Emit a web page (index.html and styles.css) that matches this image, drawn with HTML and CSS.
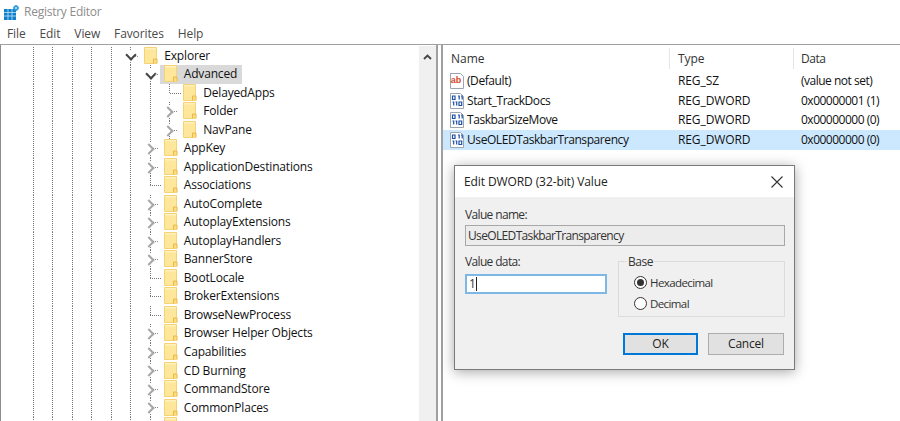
FILE: index.html
```html
<!DOCTYPE html>
<html lang="en">
<head>
<meta charset="utf-8">
<title>Registry Editor</title>
<link rel="stylesheet" href="styles.css">
</head>
<body>
<svg class="defs" width="0" height="0" aria-hidden="true">
  <defs>
    <symbol id="folder" viewBox="0 0 14 18">
      <path d="M.5 .5h12v16h-12z" fill="#fee79b" stroke="#f5d273"/>
      <path d="M1 1h11v1.500h-11z" fill="#fff0bd"/>
      <path d="M9.500 16.500v-4.500h3.500v4.500" fill="#fddc7c" stroke="#e9b94a"/>
    </symbol>
    <symbol id="sz" viewBox="0 0 16 16">
      <path d="M1.500 .5h10l3 3v12h-13z" fill="#fff" stroke="#9aa5b1"/>
      <text x="1.800" y="10.400" class="ico-ab">ab</text>
    </symbol>
    <symbol id="dw" viewBox="0 0 16 16">
      <path d="M1.500 .5h10l3 3v12h-13z" fill="#fff" stroke="#9aa5b1"/>
      <path d="M3.500 3h2.500v3.500h-2.500zM9 3h1.200v3.500M12 3h1.200v3.500M3.500 9h1.200v3.500M6.500 9h1.200v3.500M10 9h2.700v3.500h-2.700z" fill="none" stroke="#1c4fa8" stroke-width="1.200"/>
    </symbol>
  </defs>
</svg>

<header class="titlebar">
  <svg class="app-icon" width="18" height="17" viewBox="0 0 18 17" aria-hidden="true">
    <path d="M2 5h12v11H2z" fill="#0f7fc9"/>
    <path d="M6 5v11M10 5v11M2 8.500h12M2 12h12" stroke="#bfe3f7" stroke-width=".8"/>
    <path d="M12 2l2-1 2 1 1 2-1 2-2 1-2-1-1-2z" fill="#2a9ad8"/>
    <circle cx="14" cy="4" r="1" fill="#d5eefa"/>
  </svg>
  <span>Registry Editor</span>
</header>

<nav class="menubar">
  <span>File</span><span>Edit</span><span>View</span><span>Favorites</span><span>Help</span>
</nav>

<main class="panes">
  <section class="tree">
    <div class="rows">
      <div class="row"><i class="g"></i><i class="g"></i><i class="g"></i><i class="g"></i><i class="g"></i><i class="c open"></i><div class="node"><svg class="fld"><use href="#folder"/></svg>Explorer</div></div>
      <div class="row"><i class="g"></i><i class="g"></i><i class="g"></i><i class="g"></i><i class="g"></i><i class="g"></i><i class="c open"></i><div class="node sel"><svg class="fld"><use href="#folder"/></svg>Advanced</div></div>
      <div class="row"><i class="g"></i><i class="g"></i><i class="g"></i><i class="g"></i><i class="g"></i><i class="g"></i><i class="g"></i><i class="c leaf"></i><div class="node"><svg class="fld"><use href="#folder"/></svg>DelayedApps</div></div>
      <div class="row"><i class="g"></i><i class="g"></i><i class="g"></i><i class="g"></i><i class="g"></i><i class="g"></i><i class="g"></i><i class="c"></i><div class="node"><svg class="fld"><use href="#folder"/></svg>Folder</div></div>
      <div class="row"><i class="g"></i><i class="g"></i><i class="g"></i><i class="g"></i><i class="g"></i><i class="g"></i><i class="g"></i><i class="c"></i><div class="node"><svg class="fld"><use href="#folder"/></svg>NavPane</div></div>
      <div class="row"><i class="g"></i><i class="g"></i><i class="g"></i><i class="g"></i><i class="g"></i><i class="g"></i><i class="c"></i><div class="node"><svg class="fld"><use href="#folder"/></svg>AppKey</div></div>
      <div class="row"><i class="g"></i><i class="g"></i><i class="g"></i><i class="g"></i><i class="g"></i><i class="g"></i><i class="c"></i><div class="node"><svg class="fld"><use href="#folder"/></svg>ApplicationDestinations</div></div>
      <div class="row"><i class="g"></i><i class="g"></i><i class="g"></i><i class="g"></i><i class="g"></i><i class="g"></i><i class="c leaf"></i><div class="node"><svg class="fld"><use href="#folder"/></svg>Associations</div></div>
      <div class="row"><i class="g"></i><i class="g"></i><i class="g"></i><i class="g"></i><i class="g"></i><i class="g"></i><i class="c"></i><div class="node"><svg class="fld"><use href="#folder"/></svg>AutoComplete</div></div>
      <div class="row"><i class="g"></i><i class="g"></i><i class="g"></i><i class="g"></i><i class="g"></i><i class="g"></i><i class="c"></i><div class="node"><svg class="fld"><use href="#folder"/></svg>AutoplayExtensions</div></div>
      <div class="row"><i class="g"></i><i class="g"></i><i class="g"></i><i class="g"></i><i class="g"></i><i class="g"></i><i class="c"></i><div class="node"><svg class="fld"><use href="#folder"/></svg>AutoplayHandlers</div></div>
      <div class="row"><i class="g"></i><i class="g"></i><i class="g"></i><i class="g"></i><i class="g"></i><i class="g"></i><i class="c"></i><div class="node"><svg class="fld"><use href="#folder"/></svg>BannerStore</div></div>
      <div class="row"><i class="g"></i><i class="g"></i><i class="g"></i><i class="g"></i><i class="g"></i><i class="g"></i><i class="c leaf"></i><div class="node"><svg class="fld"><use href="#folder"/></svg>BootLocale</div></div>
      <div class="row"><i class="g"></i><i class="g"></i><i class="g"></i><i class="g"></i><i class="g"></i><i class="g"></i><i class="c leaf"></i><div class="node"><svg class="fld"><use href="#folder"/></svg>BrokerExtensions</div></div>
      <div class="row"><i class="g"></i><i class="g"></i><i class="g"></i><i class="g"></i><i class="g"></i><i class="g"></i><i class="c leaf"></i><div class="node"><svg class="fld"><use href="#folder"/></svg>BrowseNewProcess</div></div>
      <div class="row"><i class="g"></i><i class="g"></i><i class="g"></i><i class="g"></i><i class="g"></i><i class="g"></i><i class="c"></i><div class="node"><svg class="fld"><use href="#folder"/></svg>Browser Helper Objects</div></div>
      <div class="row"><i class="g"></i><i class="g"></i><i class="g"></i><i class="g"></i><i class="g"></i><i class="g"></i><i class="c"></i><div class="node"><svg class="fld"><use href="#folder"/></svg>Capabilities</div></div>
      <div class="row"><i class="g"></i><i class="g"></i><i class="g"></i><i class="g"></i><i class="g"></i><i class="g"></i><i class="c"></i><div class="node"><svg class="fld"><use href="#folder"/></svg>CD Burning</div></div>
      <div class="row"><i class="g"></i><i class="g"></i><i class="g"></i><i class="g"></i><i class="g"></i><i class="g"></i><i class="c"></i><div class="node"><svg class="fld"><use href="#folder"/></svg>CommandStore</div></div>
      <div class="row"><i class="g"></i><i class="g"></i><i class="g"></i><i class="g"></i><i class="g"></i><i class="g"></i><i class="c"></i><div class="node"><svg class="fld"><use href="#folder"/></svg>CommonPlaces</div></div>
      <div class="row"><i class="g"></i><i class="g"></i><i class="g"></i><i class="g"></i><i class="g"></i><i class="g"></i><i class="c"></i><div class="node"><svg class="fld"><use href="#folder"/></svg></div></div>
    </div>
    <div class="vscroll"><svg width="9" height="6" viewBox="0 0 9 6" aria-hidden="true"><path d="M1 5l3.500-3.500L8 5" fill="none" stroke="#444" stroke-width="1.800"/></svg></div>
  </section>

  <section class="list">
    <div class="lrow lhead"><span class="cn">Name</span><span class="ct">Type</span><span class="cd">Data</span></div>
    <div class="lrow"><span class="cn"><svg class="vi"><use href="#sz"/></svg>(Default)</span><span class="ct">REG_SZ</span><span class="cd">(value not set)</span></div>
    <div class="lrow"><span class="cn"><svg class="vi"><use href="#dw"/></svg>Start_TrackDocs</span><span class="ct">REG_DWORD</span><span class="cd">0x00000001 (1)</span></div>
    <div class="lrow"><span class="cn"><svg class="vi"><use href="#dw"/></svg>TaskbarSizeMove</span><span class="ct">REG_DWORD</span><span class="cd">0x00000000 (0)</span></div>
    <div class="lrow lsel"><span class="cn"><svg class="vi"><use href="#dw"/></svg>UseOLEDTaskbarTransparency</span><span class="ct">REG_DWORD</span><span class="cd">0x00000000 (0)</span></div>
  </section>
</main>

<div class="dialog" role="dialog">
  <div class="dtitle">
    <span>Edit DWORD (32-bit) Value</span>
    <svg width="12" height="12" viewBox="0 0 12 12" aria-hidden="true"><path d="M.5.500l11 11M11.500.500l-11 11" stroke="#333" stroke-width="1.100"/></svg>
  </div>
  <div class="dbody">
    <div class="lbl">Value name:</div>
    <div class="namebox">UseOLEDTaskbarTransparency</div>
    <div class="cols">
      <div class="datacol">
        <div class="lbl">Value data:</div>
        <div class="databox">1<i class="caret"></i></div>
      </div>
      <div class="base">
        <span class="legend">Base</span>
        <div class="radio"><i class="dot on"></i>Hexadecimal</div>
        <div class="radio"><i class="dot"></i>Decimal</div>
      </div>
    </div>
    <div class="btns">
      <div class="btn def">OK</div>
      <div class="btn wide">Cancel</div>
    </div>
  </div>
</div>
</body>
</html>
```
FILE: styles.css
```css
* { box-sizing: border-box; }
html, body { margin: 0; height: 421px; overflow: hidden; }
body {
  position: relative;
  background: #fff;
  font: 12px/16px "Open Sans", "Noto Sans", sans-serif;
  color: #1a1a1a;
}
.defs { position: absolute; }
.ico-ab { font: bold 9px "Liberation Sans", sans-serif; fill: #d4472a; }

.titlebar { height: 24px; display: flex; align-items: center; gap: 4px; padding-left: 2px; color: #8d8d8d; letter-spacing: -.25px; }
.menubar { height: 20px; display: flex; gap: 14px; padding: 0 0 0 7px; align-items: center; color: #4a4a4a; letter-spacing: -.12px; }

.panes { height: 377px; display: flex; border-top: 1px solid #a0a0a0; }

.tree { width: 438px; border-left: 1px solid #8c8c8c; border-right: 2px solid #a0a0a0; flex: none; display: flex; }
.rows { flex: 1; min-width: 0; overflow: hidden; padding: 1.500px 0 0 22.250px; letter-spacing: -.17px; }
.vscroll { width: 17px; flex: none; background: #f0f0f0; margin-top: 1px; display: flex; justify-content: center; align-items: flex-start; padding-top: 8px; }

.row { height: 18.530px; display: flex; align-items: stretch; white-space: nowrap; }
.g, .c { flex: none; width: 19.500px; position: relative; }
.g { background: repeating-linear-gradient(#777 0 1px, transparent 1px 2px) center / 1px 100% no-repeat; }
.c {
  background:
    repeating-linear-gradient(#777 0 1px, transparent 1px 2px) center top / 1px 3px no-repeat,
    repeating-linear-gradient(#777 0 1px, transparent 1px 2px) center bottom / 1px 3px no-repeat;
}
.c::before { content: ""; position: absolute; left: 4.500px; top: 6px; width: 6px; height: 6px; border-right: 2px solid #a6a6a6; border-top: 2px solid #a6a6a6; transform: rotate(45deg); }
.c::after { content: ""; position: absolute; left: 14.500px; top: 9px; width: 4px; height: 1px; background: repeating-linear-gradient(90deg, #888 0 1px, transparent 1px 2px); }
.c.open::before { left: 6.500px; top: 4.500px; border-color: #444; transform: rotate(135deg); }
.c.leaf { background: none; }
.c.leaf::before { left: 9.500px; top: 0; width: 1px; height: 10px; border: 0; transform: none; background: repeating-linear-gradient(#777 0 1px, transparent 1px 2px); }
.c.leaf::after { left: 10px; width: 12px; background: repeating-linear-gradient(90deg, #777 0 1px, transparent 1px 2px); }
.node { display: flex; align-items: center; padding: 0 5px 0 4px; color: #111; }
.sel { background: #d9d9d9; }
.fld { width: 14px; height: 18px; margin-right: 6px; flex: none; }

.list { flex: 1; margin-left: 3px; border-left: 2px solid #a0a0a0; padding-top: 3px; min-width: 0; }
.lrow { height: 19.600px; display: flex; align-items: center; white-space: nowrap; color: #111; }
.lhead { height: 21px; margin-bottom: 2.500px; color: #333; }
.cn { width: 227px; padding-left: 6px; display: flex; align-items: center; flex: none; letter-spacing: -.42px; }
.lhead .cn, .lhead .ct, .lhead .cd { align-self: stretch; line-height: 21px; }
.lhead .cn { padding-left: 8px; letter-spacing: 0; border-right: 1px solid #e5e5e5; }
.lhead .ct { border-right: 1px solid #e5e5e5; }
.ct { width: 124px; padding-left: 8px; flex: none; letter-spacing: -.1px; }
.cd { padding-left: 7px; flex: none; letter-spacing: -.5px; }
.vi { width: 16px; height: 16px; margin-right: 2px; flex: none; letter-spacing: 0; }
.lsel { background: #cce8ff; }

.dialog {
  position: absolute; left: 454px; top: 165px; width: 341px; height: 205px;
  border: 1px solid #7a7a7a; background: #f0f0f0; box-shadow: 0 2px 12px rgba(0,0,0,.35);
}
.dtitle { height: 31px; background: #fff; display: flex; justify-content: space-between; align-items: center; padding: 0 11px 0 9px; color: #222; letter-spacing: -.1px; }
.dbody { padding: 10px 9px 0 10px; color: #333; letter-spacing: -.65px; }
.lbl { height: 17px; line-height: 16px; }
.namebox { height: 21px; margin-top: 1px; border: 1px solid #a8a8a8; background: #ececec; line-height: 19px; padding-left: 2px; }
.cols { display: flex; justify-content: space-between; margin-top: 8px; }
.datacol { width: 142px; }
.databox { height: 20px; margin-top: 3px; border: 2px solid #7db8e4; background: #fff; padding-left: 2px; display: flex; align-items: center; }
.caret { width: 1px; height: 14px; background: #222; margin-left: 1px; }
.base { padding: 10px 0 0 15px; width: 167px; height: 56px; border: 1px solid #dcdcdc; position: relative; margin-top: 7px; }
.legend { position: absolute; left: 8px; top: -8px; padding: 0 1px; background: #f0f0f0; letter-spacing: -.5px; }
.radio { display: flex; align-items: center; gap: 3px; height: 21px; font-size: 11.500px; letter-spacing: -.6px; }
.dot { width: 13px; height: 13px; border: 1px solid #333; border-radius: 50%; background: #fff; display: flex; align-items: center; justify-content: center; }
.dot.on::before { content: ""; width: 7px; height: 7px; border-radius: 50%; background: #333; }
.btns { display: flex; justify-content: flex-end; gap: 10px; margin-top: 16px; padding-right: 1px; letter-spacing: -.2px; }
.btn { width: 75px; height: 22px; background: #e1e1e1; border: 1px solid #adadad; text-align: center; line-height: 20px; color: #222; }
.btn.wide { width: 76px; }
.btn.def { border: 2px solid #0078d7; line-height: 18px; }
```
